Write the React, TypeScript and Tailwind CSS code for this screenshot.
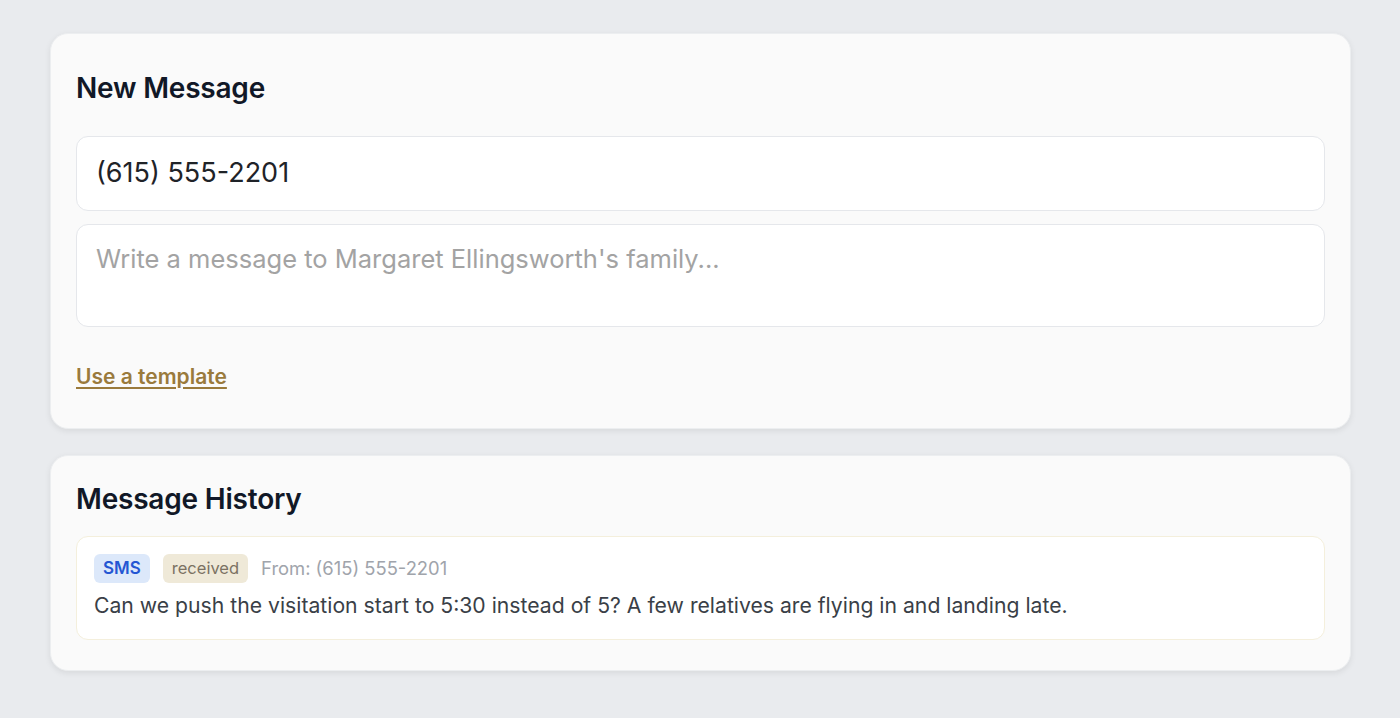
import React from "react";

export default function App() {
  return (
    <div
      className="min-h-[718px] w-full bg-[#e9ebee] px-[50px] pt-[33px] pb-[40px]"
      style={{ fontFamily: "Inter, 'Noto Sans', sans-serif" }}
    >
      <div className="w-[1301px] flex flex-col gap-[26px]">
        <div className="rounded-[18px] bg-[#fafafa] shadow-[0_2px_6px_rgba(0,0,0,0.08)] border border-[#eceef0] px-[25px] pt-[36px] pb-[38px]">
          <h2 className="text-[28px] leading-[36px] font-semibold text-[#111827] tracking-[-0.2px]">New Message</h2>
          <div className="mt-[30px] h-[75px] rounded-[12px] border border-[#e5e7eb] bg-white flex items-center px-[19px]">
            <span className="text-[27px] text-[#1f2328]">(615) 555-2201</span>
          </div>
          <div className="mt-[13px] h-[103px] rounded-[12px] border border-[#e5e7eb] bg-white px-[19px] pt-[17px]">
            <span className="text-[25.5px] leading-[34px] text-[#a3a3a3]">Write a message to Margaret Ellingsworth's family...</span>
          </div>
          <div className="mt-[36px]">
            <a className="text-[21px] leading-[27px] font-semibold text-[#9a7a3c] underline underline-offset-[3px] decoration-[2px]">Use a template</a>
          </div>
        </div>

        <div className="rounded-[18px] bg-[#fafafa] shadow-[0_2px_6px_rgba(0,0,0,0.08)] border border-[#eceef0] px-[25px] pt-[26px] pb-[30px]">
          <h2 className="text-[28px] leading-[34px] font-semibold text-[#111827] tracking-[-0.2px]">Message History</h2>
          <div className="mt-[20px] rounded-[12px] border border-[#f4efdc] bg-white px-[17px] pt-[17px] pb-[19px]">
            <div className="flex items-center gap-[13px]">
              <span className="rounded-[6px] bg-[#dce8fa] px-[9px] h-[29px] flex items-center text-[17px] font-semibold text-[#2456d3]">SMS</span>
              <span className="rounded-[6px] bg-[#efe9d8] px-[9px] h-[29px] flex items-center text-[16.5px] text-[#7b7263]">received</span>
              <span className="text-[18.4px] text-[#a0a4ab]">From: (615) 555-2201</span>
            </div>
            <p className="mt-[7px] text-[21.2px] leading-[30px] text-[#3a3f47]">
              Can we push the visitation start to 5:30 instead of 5? A few relatives are flying in and landing late.
            </p>
          </div>
        </div>
      </div>
    </div>
  );
}
